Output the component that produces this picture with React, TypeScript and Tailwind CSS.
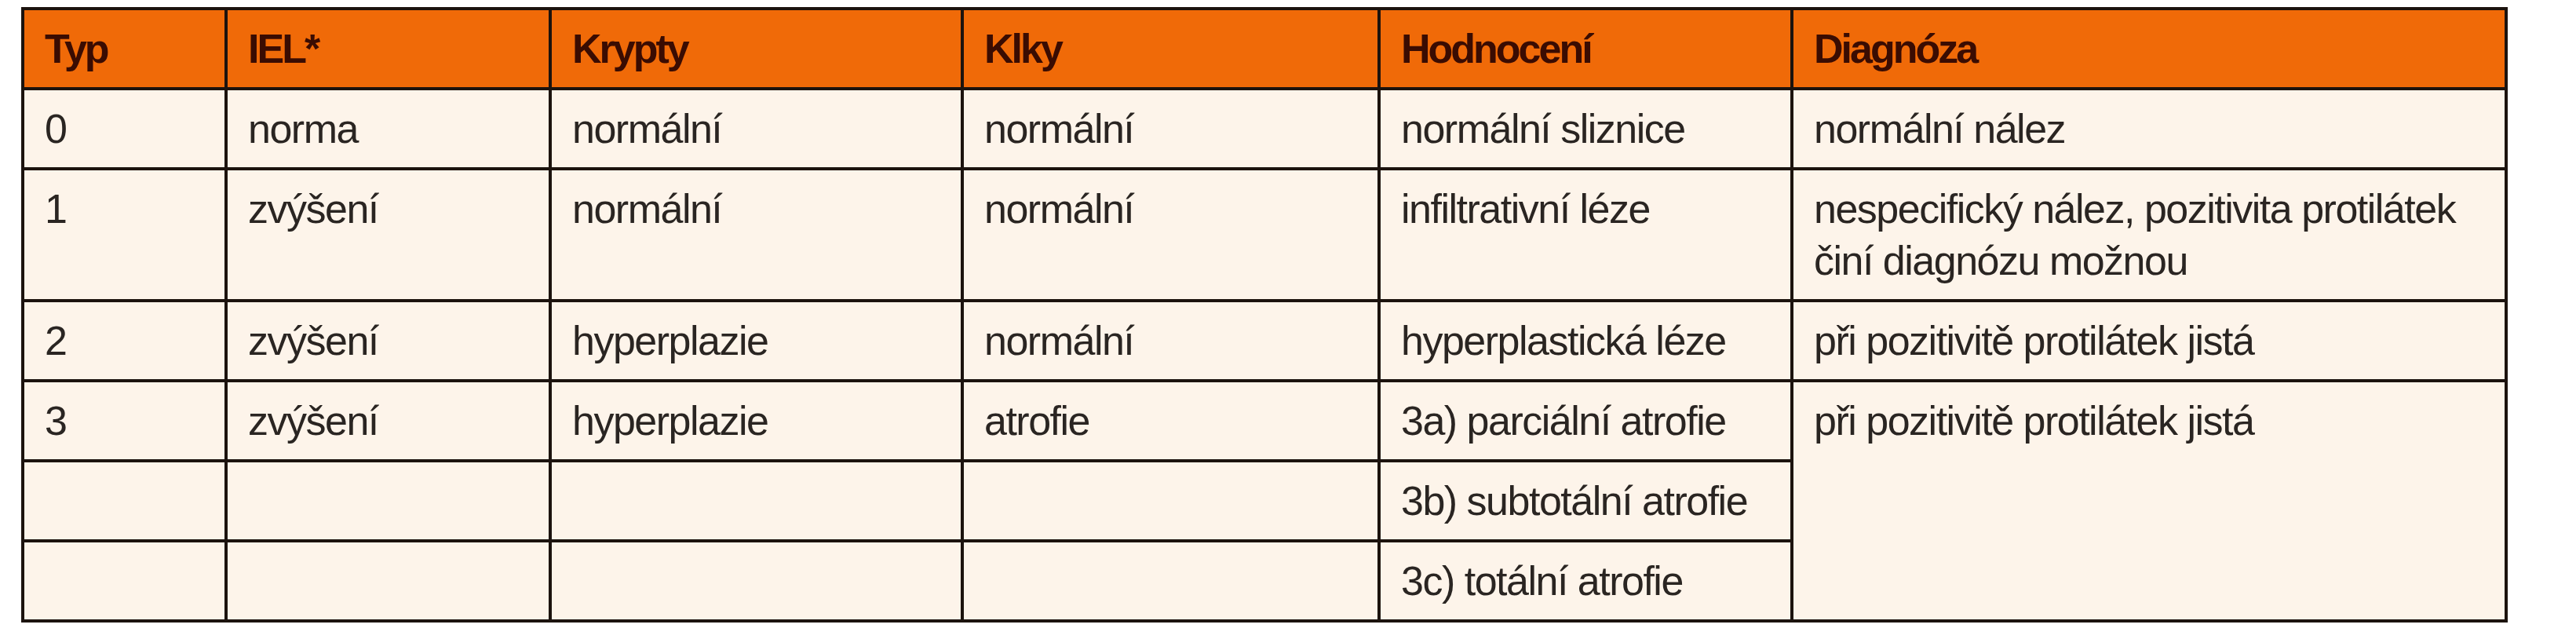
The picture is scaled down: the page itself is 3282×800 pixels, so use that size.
import React from 'react';

type Row = string[];

const header = ['Typ', 'IEL*', 'Krypty', 'Klky', 'Hodnocení', 'Diagnóza'];

const widths = [259, 413, 525, 531, 526, 910];

const rows: Row[] = [
  ['0', 'norma', 'normální', 'normální', 'normální sliznice', 'normální nález'],
  ['1', 'zvýšení', 'normální', 'normální', 'infiltrativní léze', 'nespecifický nález, pozitivita protilátek činí diagnózu možnou'],
  ['2', 'zvýšení', 'hyperplazie', 'normální', 'hyperplastická léze', 'při pozitivitě protilátek jistá'],
];

const cell = 'border-[4px] border-[#1c130e] pl-[26px] pr-[8px] py-[16px] align-top text-left';

export default function App() {
  return (
    <div className="min-h-screen bg-white pt-[9px] pl-[27px] font-['Liberation_Sans',Arial,sans-serif]">
      <table className="table-fixed border-collapse w-[3168px] text-[52px] leading-[66px]">
        <colgroup>
          {widths.map((w, i) => (
            <col key={i} style={{ width: w }} />
          ))}
        </colgroup>
        <thead>
          <tr className="bg-[#f06a08]">
            {header.map((h, i) => (
              <th key={i} className={`${cell} font-bold tracking-[-3px] text-[#3a0c02]`}>
                {h}
              </th>
            ))}
          </tr>
        </thead>
        <tbody className="bg-[#fdf4ea] text-[#2a2522] tracking-[-1.5px]">
          {rows.map((r, i) => (
            <tr key={i}>
              {r.map((c, j) => (
                <td key={j} className={cell}>{c}</td>
              ))}
            </tr>
          ))}
          <tr>
            <td className={cell}>3</td>
            <td className={cell}>zvýšení</td>
            <td className={cell}>hyperplazie</td>
            <td className={cell}>atrofie</td>
            <td className={cell}>3a) parciální atrofie</td>
            <td className={cell} rowSpan={3}>při pozitivitě protilátek jistá</td>
          </tr>
          <tr>
            <td className={cell}></td>
            <td className={cell}></td>
            <td className={cell}></td>
            <td className={cell}></td>
            <td className={cell}>3b) subtotální atrofie</td>
          </tr>
          <tr>
            <td className={cell}></td>
            <td className={cell}></td>
            <td className={cell}></td>
            <td className={cell}></td>
            <td className={cell}>3c) totální atrofie</td>
          </tr>
        </tbody>
      </table>
    </div>
  );
}
